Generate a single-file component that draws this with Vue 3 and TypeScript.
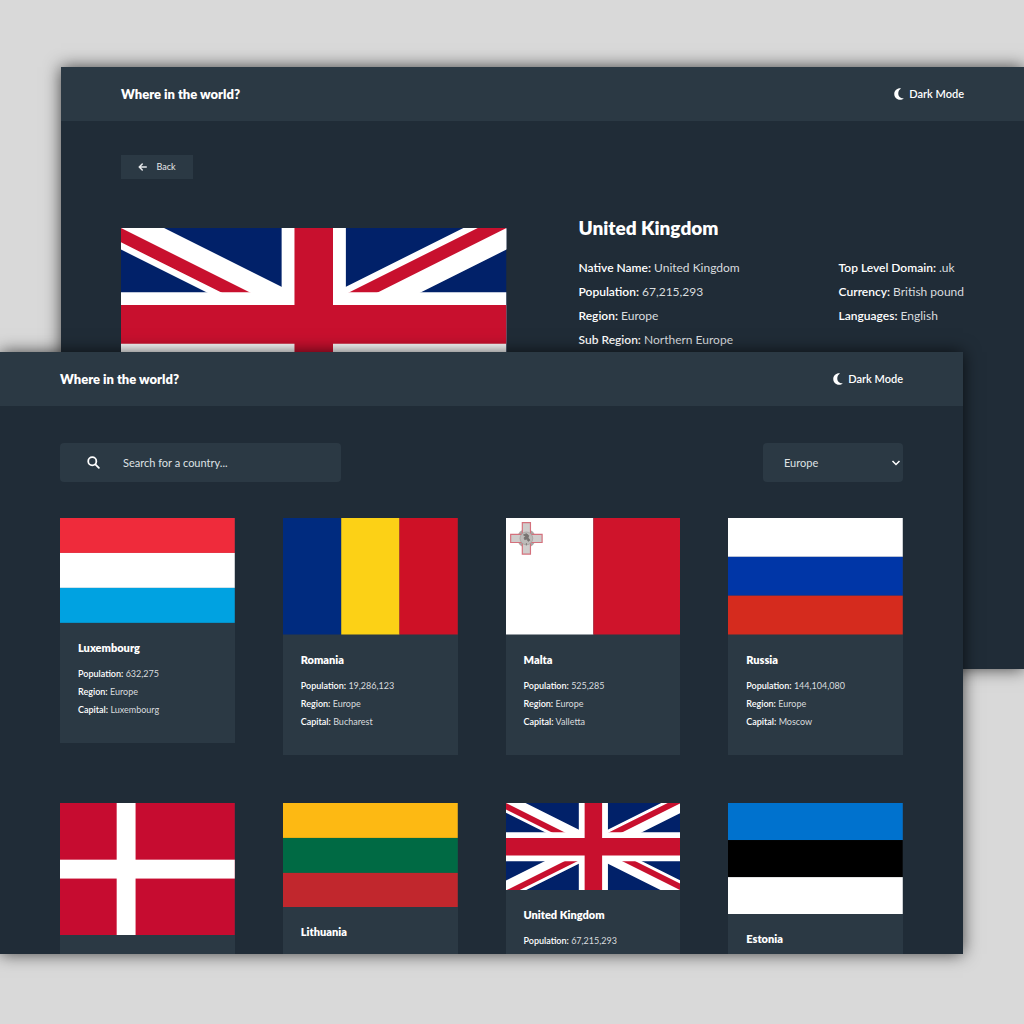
<script setup lang="ts">
import { ref } from 'vue'

interface Bar { x: number; y: number; w: number; h: number; fill: string }
interface Country {
  flag: string
  name?: string
  facts: [string, string][]
  viewBox: string
  bars: Bar[]
}

function rows(w: number, h: number, fills: string[]): Bar[] {
  return fills.map((fill, i) => ({ x: 0, y: (h / fills.length) * i, w, h: h / fills.length, fill }))
}
function columns(w: number, h: number, fills: string[]): Bar[] {
  return fills.map((fill, i) => ({ x: (w / fills.length) * i, y: 0, w: w / fills.length, h, fill }))
}
function facts(population: string, capital: string): [string, string][] {
  return [['Population', population], ['Region', 'Europe'], ['Capital', capital]]
}

const countries: Country[] = [
  { flag: 'lu', name: 'Luxembourg', facts: facts('632,275', 'Luxembourg'), viewBox: '0 0 500 300', bars: rows(500, 300, ['#ef2b3b', '#ffffff', '#00a2e1']) },
  { flag: 'ro', name: 'Romania', facts: facts('19,286,123', 'Bucharest'), viewBox: '0 0 300 200', bars: columns(300, 200, ['#002b7f', '#fcd116', '#ce1126']) },
  { flag: 'mt', name: 'Malta', facts: facts('525,285', 'Valletta'), viewBox: '0 0 300 200', bars: columns(300, 200, ['#ffffff', '#cf142b']) },
  { flag: 'ru', name: 'Russia', facts: facts('144,104,080', 'Moscow'), viewBox: '0 0 300 200', bars: rows(300, 200, ['#ffffff', '#0036a7', '#d52b1e']) },
  {
    flag: 'dk', facts: [], viewBox: '0 0 37 28',
    bars: [
      { x: 0, y: 0, w: 37, h: 28, fill: '#c60c30' },
      { x: 12, y: 0, w: 4, h: 28, fill: '#ffffff' },
      { x: 0, y: 12, w: 37, h: 4, fill: '#ffffff' },
    ],
  },
  { flag: 'lt', name: 'Lithuania', facts: [], viewBox: '0 0 500 300', bars: rows(500, 300, ['#fdb913', '#006a44', '#c1272d']) },
  { flag: 'gb', name: 'United Kingdom', facts: [['Population', '67,215,293']], viewBox: '0 0 60 30', bars: [] },
  { flag: 'ee', name: 'Estonia', facts: [], viewBox: '0 0 330 210', bars: rows(330, 210, ['#0072ce', '#000000', '#ffffff']) },
]

const mainFacts = [
  ['Native Name', 'United Kingdom'],
  ['Population', '67,215,293'],
  ['Region', 'Europe'],
  ['Sub Region', 'Northern Europe'],
]
const sideFacts = [
  ['Top Level Domain', '.uk'],
  ['Currency', 'British pound'],
  ['Languages', 'English'],
]

const query = ref('')
const region = ref('Europe')
</script>

<template>
  <div class="desk">
    <svg class="defs" aria-hidden="true">
      <defs>
        <clipPath id="uk-saltire">
          <path d="M30 15h30v15zM30 15v15H0zM30 15H0V0zM30 15V0h30z" />
        </clipPath>
        <symbol id="uk" viewBox="0 0 60 30">
          <path fill="#012169" d="M0 0h60v30H0z" />
          <path stroke="#fff" stroke-width="6" d="M0 0l60 30M60 0L0 30" />
          <path stroke="#c8102e" stroke-width="4" clip-path="url(#uk-saltire)" d="M0 0l60 30M60 0L0 30" />
          <path stroke="#fff" stroke-width="10" d="M30 0v30M0 15h60" />
          <path stroke="#c8102e" stroke-width="6" d="M30 0v30M0 15h60" />
        </symbol>
        <symbol id="moon" viewBox="0 0 20 24">
          <path fill="currentColor" d="M12.500 0.500C5.500 0.500 0.500 5.500 0.500 12S5.500 23.500 12 23.500c3 0 5.500-1 7.500-3-6 0.500-11-3-11-9.500 0-4.500 2-8 5.500-10z" />
        </symbol>
      </defs>
    </svg>

    <section class="window back-window">
      <header class="bar">
        <h1>Where in the world?</h1>
        <button type="button" class="mode"><svg aria-hidden="true"><use href="#moon" /></svg>Dark Mode</button>
      </header>
      <main class="detail">
        <button type="button" class="back">
          <svg viewBox="0 0 18 16" aria-hidden="true"><path d="M16.500 8H3M8.500 2L2.500 8l6 6" fill="none" stroke="currentColor" stroke-width="3" stroke-linecap="round" stroke-linejoin="round" /></svg>
          Back
        </button>
        <div class="split">
          <svg class="big-flag" viewBox="0 0 60 30" aria-hidden="true"><use href="#uk" /></svg>
          <div>
            <h2>United Kingdom</h2>
            <div class="facts">
              <ul>
                <li v-for="[label, value] in mainFacts" :key="label"><b>{{ label }}:</b> {{ value }}</li>
              </ul>
              <ul>
                <li v-for="[label, value] in sideFacts" :key="label"><b>{{ label }}:</b> {{ value }}</li>
              </ul>
            </div>
          </div>
        </div>
      </main>
    </section>

    <section class="window front-window">
      <header class="bar">
        <h1>Where in the world?</h1>
        <button type="button" class="mode"><svg aria-hidden="true"><use href="#moon" /></svg>Dark Mode</button>
      </header>
      <main class="list">
        <div class="filters">
          <label class="search">
            <svg viewBox="0 0 16 16" aria-hidden="true"><circle cx="6.500" cy="6.500" r="5" /><path d="M10.300 10.300L14.600 14.600" /></svg>
            <input v-model="query" type="text" placeholder="Search for a country..." aria-label="Search for a country" />
          </label>
          <label class="region">
            <select v-model="region" aria-label="Region">
              <option>Europe</option>
            </select>
            <svg viewBox="0 0 10 8" aria-hidden="true"><path d="M1.500 2L5 5.500L8.500 2" /></svg>
          </label>
        </div>
        <div class="cards">
          <article v-for="c in countries" :key="c.flag" class="card">
            <svg class="flag" :viewBox="c.viewBox" preserveAspectRatio="none" aria-hidden="true">
              <rect v-for="(b, i) in c.bars" :key="i" :x="b.x" :y="b.y" :width="b.w" :height="b.h" :fill="b.fill" />
              <use v-if="c.flag === 'gb'" href="#uk" />
              <g v-if="c.flag === 'mt'">
                <circle cx="35" cy="35" r="16" fill="#a9a6a4" />
                <path d="M28 8h14v20h20v14H42v20H28V42H8V28h20z" fill="#cfcccb" stroke="#d4707c" stroke-width="2" />
                <circle cx="35" cy="35" r="11" fill="#bdbab8" stroke="#999694" stroke-width="1" />
                <path d="M30 29l5-2 4 3-1 4 3 4-3 2-2-4-4 1-1-3 3-2zM35 43v4" fill="#777371" stroke="#777371" stroke-width="1.500" />
              </g>
            </svg>
            <div class="info">
              <h3 v-if="c.name">{{ c.name }}</h3>
              <p v-for="[label, value] in c.facts" :key="label"><b>{{ label }}:</b> {{ value }}</p>
            </div>
          </article>
        </div>
      </main>
    </section>
  </div>
</template>

<style>
body {
  margin: 0;
  background: #d9d9d9;
}
</style>

<style scoped>
.desk {
  position: relative;
  min-height: 100vh;
  overflow: hidden;
  background: #d9d9d9;
  color: #fff;
  font-family: Lato, "Open Sans", sans-serif;
}
.defs {
  position: absolute;
  width: 0;
  height: 0;
}
.window {
  position: absolute;
  aspect-ratio: 8 / 5;
  overflow: hidden;
  background: #202c37;
  box-shadow: 0 0 16px rgba(0, 0, 0, 0.7);
}
.back-window {
  top: 67px;
  left: 61px;
  right: 0;
}
.front-window {
  top: 352px;
  left: 0;
  right: 61px;
}
.bar {
  display: flex;
  align-items: center;
  justify-content: space-between;
  height: 54px;
  padding: 0 60px;
  background: #2b3944;
}
h1, h2, h3, p, ul {
  margin: 0;
}
h1 {
  font-size: 13px;
  font-weight: 800;
  line-height: 16px;
}
button, input, select {
  border: 0;
  color: inherit;
  font-family: inherit;
}
.mode {
  display: flex;
  align-items: center;
  gap: 5px;
  padding: 0;
  background: none;
  font-size: 11px;
  font-weight: 600;
  line-height: 16px;
}
.mode svg {
  width: 10px;
  height: 12px;
}
.detail {
  padding: 34px 60px 0;
}
.back {
  display: flex;
  align-items: center;
  justify-content: center;
  gap: 9px;
  width: 72px;
  height: 24px;
  padding: 0;
  background: #2b3944;
  color: #e6e8ea;
  font-size: 9px;
  line-height: 16px;
}
.back svg {
  width: 9px;
  height: 8px;
}
.split {
  display: grid;
  grid-template-columns: 1fr 1fr;
  gap: 72px;
  align-items: start;
  margin-top: 37px;
}
.big-flag {
  display: block;
  width: 100%;
  margin-top: 12px;
}
h2 {
  font-size: 19px;
  font-weight: 800;
  line-height: 24px;
}
.facts {
  display: flex;
  justify-content: space-between;
  margin-top: 16px;
}
.facts ul {
  padding: 0;
  list-style: none;
}
.facts li {
  color: #d9dcdf;
  font-size: 12px;
  line-height: 24px;
  white-space: nowrap;
}
b {
  color: #fff;
  font-weight: 600;
}
.list {
  padding: 37px 60px 0;
}
.filters {
  display: flex;
  justify-content: space-between;
}
.search {
  display: flex;
  align-items: center;
  gap: 23px;
  box-sizing: border-box;
  width: 281px;
  height: 39px;
  padding: 0 16px 0 27px;
  border-radius: 4px;
  background: #2b3944;
}
.search svg {
  flex: none;
  width: 13px;
  height: 13px;
  fill: none;
  stroke: #fff;
  stroke-width: 2.2;
  stroke-linecap: round;
}
.search input {
  flex: 1;
  min-width: 0;
  padding: 0;
  outline: 0;
  background: none;
  font-size: 11px;
  line-height: 16px;
}
.search input::placeholder {
  color: #dfe2e4;
  opacity: 1;
}
.region {
  position: relative;
  width: 140px;
}
.region select {
  width: 100%;
  height: 39px;
  padding: 0 21px;
  border-radius: 4px;
  appearance: none;
  background: #2b3944;
  color: #dfe2e4;
  font-size: 11px;
}
.region svg {
  position: absolute;
  top: 16px;
  right: 2px;
  width: 10px;
  height: 8px;
  fill: none;
  stroke: #fff;
  stroke-width: 1.5;
  pointer-events: none;
}
.cards {
  display: grid;
  grid-template-columns: repeat(4, 1fr);
  gap: 48px;
  align-items: start;
  margin-top: 36px;
}
.card {
  background: #2b3944;
}
.flag {
  display: block;
  width: 100%;
}
.info {
  min-height: 78px;
  padding: 18px 18px 24px;
}
h3 {
  margin-bottom: 10px;
  font-size: 11px;
  font-weight: 800;
  line-height: 14px;
}
.info p {
  color: #d9dcdf;
  font-size: 9px;
  line-height: 18px;
}
</style>
